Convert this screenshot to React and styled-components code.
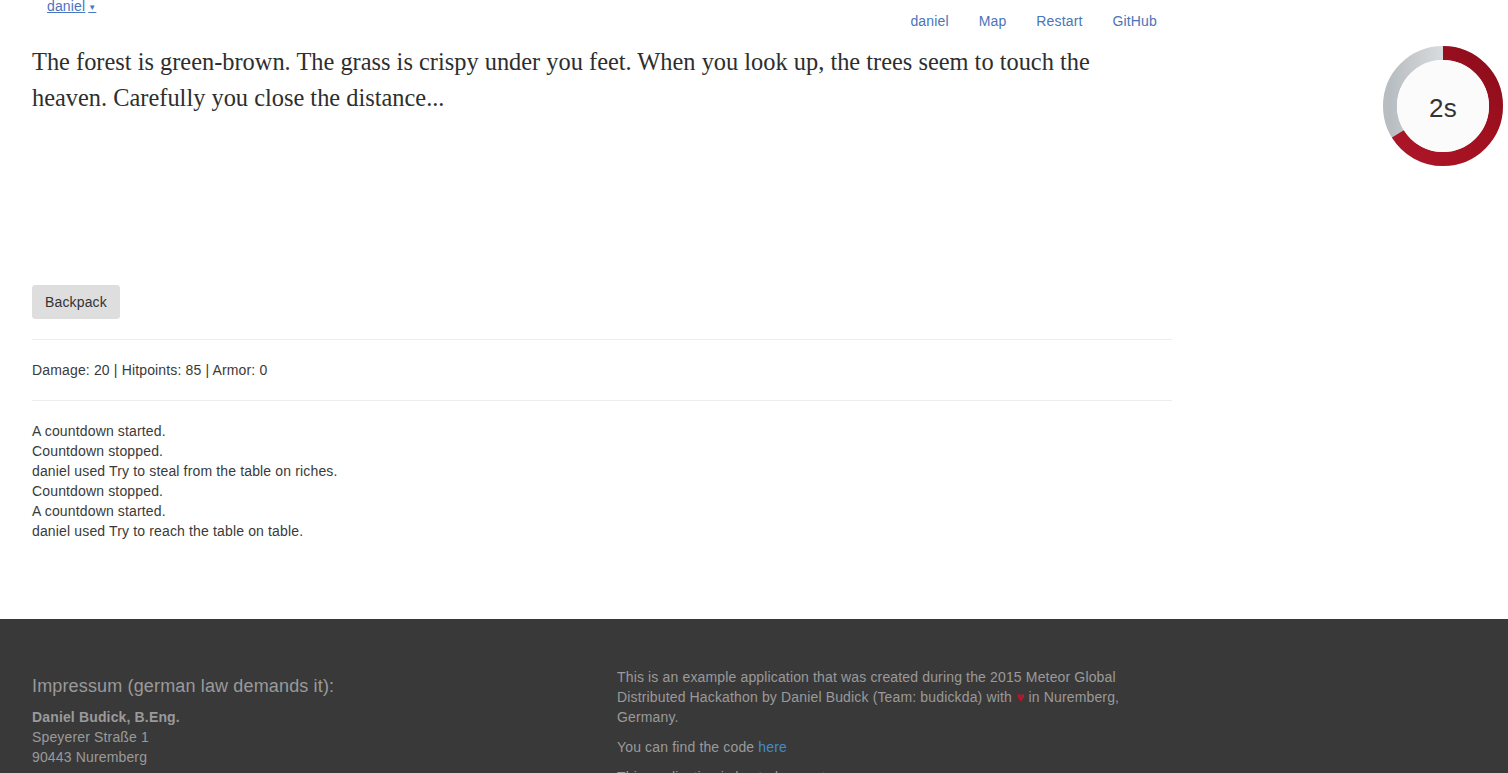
import React from "react";
import styled, { createGlobalStyle } from "styled-components";

const Global = createGlobalStyle`
  html, body { margin: 0; padding: 0; background: #fff; }
  body {
    font-family: "Liberation Sans", Arial, sans-serif;
    font-size: 14px;
    line-height: 20px;
    letter-spacing: 0.15px;
    color: #3a3a3a;
  }
  * { box-sizing: border-box; }
`;

const Page = styled.div`
  display: flex;
  flex-direction: column;
  min-height: 100vh;
`;

const Top = styled.div`
  display: flex;
  align-items: flex-start;
`;

const Main = styled.main`
  width: 1172px;
  padding-left: 32px;
  display: flex;
  flex-direction: column;
`;

const Header = styled.header`
  height: 44px;
  display: flex;
  justify-content: space-between;
  align-items: flex-start;
`;

const UserLink = styled.a`
  margin-left: 15px;
  margin-top: -1px;
  line-height: 14px;
  font-size: 14px;
  color: #4a75bf;
  text-decoration: underline;
  cursor: pointer;
`;

const Caret = styled.span`
  font-size: 8px;
  margin-left: 3px;
  vertical-align: 1px;
`;

const Nav = styled.nav`
  display: flex;
  margin-top: 11px;
`;

const NavItem = styled.a`
  padding: 0 15px;
  font-size: 14px;
  line-height: 20px;
  color: #4a75b8;
  text-decoration: none;
`;

const Story = styled.p`
  margin: 0;
  max-width: 1110px;
  min-height: 241px;
  font-family: "Liberation Serif", "Times New Roman", serif;
  font-size: 24.4px;
  line-height: 36px;
  letter-spacing: 0;
  color: #2e2e2e;
`;

const Button = styled.button`
  align-self: flex-start;
  height: 34px;
  padding: 6px 12px;
  border: 1px solid #dedede;
  border-radius: 3px;
  background: #dedede;
  color: #333;
  font-family: "Liberation Sans", Arial, sans-serif;
  font-size: 14px;
  line-height: 20px;
  letter-spacing: 0.15px;
`;

const Rule = styled.hr`
  margin: 20px 0;
  border: 0;
  border-top: 1px solid #eee;
  height: 0;
`;

const Stats = styled.p`
  margin: 0;
`;

const Log = styled.div`
  display: flex;
  flex-direction: column;
  margin-bottom: 78px;
`;

const Aside = styled.aside`
  margin-left: auto;
  margin-top: 46px;
  margin-right: 5px;
`;

const Timer = styled.div`
  position: relative;
  width: 120px;
  height: 120px;
`;

const TimerLabel = styled.span`
  position: absolute;
  inset: 0;
  display: flex;
  align-items: center;
  justify-content: center;
  font-size: 26px;
  color: #333;
  padding-top: 4px;
`;

const Footer = styled.footer`
  flex: 1;
  background: #393939;
  color: #9a9a9a;
  padding: 48px 0 40px 32px;
  display: grid;
  grid-template-columns: 555px 555px;
  column-gap: 30px;
`;

const FooterCol = styled.div`
  display: flex;
  flex-direction: column;
`;

const FooterTitle = styled.h4`
  margin: 10px 0 10px;
  font-size: 18px;
  font-weight: 400;
  line-height: 1.1;
`;

const FooterP = styled.p`
  margin: 0 0 10px;
`;

const Strong = styled.strong`
  font-weight: 700;
`;

const Heart = styled.span`
  color: #b3162c;
`;

const FLink = styled.a`
  color: #428bca;
  text-decoration: none;
`;

const logLines = [
  "A countdown started.",
  "Countdown stopped.",
  "daniel used Try to steal from the table on riches.",
  "Countdown stopped.",
  "A countdown started.",
  "daniel used Try to reach the table on table.",
];

function CountdownRing({ fraction }) {
  const r = 53;
  const c = 2 * Math.PI * r;
  return (
    <svg width="120" height="120" viewBox="0 0 120 120">
      <defs>
        <linearGradient id="g-grey" x1="0" y1="0" x2="1" y2="0">
          <stop offset="0" stopColor="#b8bdc1" />
          <stop offset="0.5" stopColor="#d9dcde" />
          <stop offset="1" stopColor="#cfd3d6" />
        </linearGradient>
        <linearGradient id="g-red" x1="0" y1="0" x2="1" y2="1">
          <stop offset="0" stopColor="#ad1629" />
          <stop offset="0.6" stopColor="#a0101f" />
          <stop offset="1" stopColor="#8a0d1c" />
        </linearGradient>
      </defs>
      <circle cx="60" cy="60" r={r} fill="none" stroke="url(#g-grey)" strokeWidth="14" />
      <circle
        cx="60"
        cy="60"
        r={r}
        fill="none"
        stroke="url(#g-red)"
        strokeWidth="14"
        strokeDasharray={`${c * fraction} ${c}`}
        transform="rotate(-90 60 60)"
      />
      <circle cx="60" cy="60" r="46" fill="#fbfbfb" />
    </svg>
  );
}

export default function App() {
  return (
    <Page>
      <Global />
      <Top>
        <Main>
          <Header>
            <UserLink>
              daniel<Caret>▼</Caret>
            </UserLink>
            <Nav>
              <NavItem>daniel</NavItem>
              <NavItem>Map</NavItem>
              <NavItem>Restart</NavItem>
              <NavItem>GitHub</NavItem>
            </Nav>
          </Header>
          <Story>
            The forest is green-brown. The grass is crispy under you feet. When you look up, the
            trees seem to touch the heaven. Carefully you close the distance...
          </Story>
          <Button>Backpack</Button>
          <Rule />
          <Stats>Damage: 20 | Hitpoints: 85 | Armor: 0</Stats>
          <Rule />
          <Log>
            {logLines.map((l, i) => (
              <span key={i}>{l}</span>
            ))}
          </Log>
        </Main>
        <Aside>
          <Timer>
            <CountdownRing fraction={0.661} />
            <TimerLabel>2s</TimerLabel>
          </Timer>
        </Aside>
      </Top>
      <Footer>
        <FooterCol>
          <FooterTitle>Impressum (german law demands it):</FooterTitle>
          <Strong>Daniel Budick, B.Eng.</Strong>
          <span>Speyerer Straße 1</span>
          <span>90443 Nuremberg</span>
        </FooterCol>
        <FooterCol>
          <FooterP>
            This is an example application that was created during the 2015 Meteor Global
            Distributed Hackathon by Daniel Budick (Team: budickda) with <Heart>♥</Heart> in
            Nuremberg, Germany.
          </FooterP>
          <FooterP>
            You can find the code <FLink>here</FLink>
          </FooterP>
          <FooterP>
            This application is hosted on <FLink>meteor.com</FLink>
          </FooterP>
        </FooterCol>
      </Footer>
    </Page>
  );
}
